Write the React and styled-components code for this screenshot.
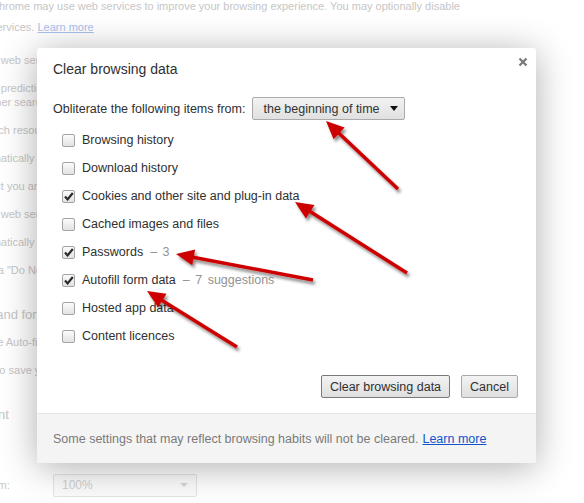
import React from "react";
import styled, { createGlobalStyle } from "styled-components";

const GlobalStyle = createGlobalStyle`
  html, body {
    margin: 0;
    padding: 0;
    background: #fff;
    overflow: hidden;
  }
  body {
    font-family: "Liberation Sans", Arial, sans-serif;
  }
`;

const Screen = styled.div`
  position: relative;
  width: 584px;
  height: 503px;
  overflow: hidden;
  background: #fff;
`;

// faded settings page behind the overlay
const Page = styled.div`
  font-size: 11px;
  color: #c6c6c6;
`;

const Intro = styled.p`
  margin: -4px 0 0 -9px;
  line-height: 21px;
  white-space: nowrap;
`;

const FadedLink = styled.span`
  color: #a8c0ec;
  text-decoration: underline;
`;

const Section = styled.div`
  display: flex;
  flex-direction: column;
  margin-left: -31px;
  margin-top: 8px;
`;

const PageRow = styled.div`
  padding: 7px 0;
  line-height: 14px;
  white-space: nowrap;
`;

const PageHeading = styled.div`
  margin: 22px 0 4px ${(p) => p.$indent}px;
  font-size: 13px;
  line-height: 18px;
  white-space: nowrap;
`;

const ControlRow = styled.div`
  display: flex;
  align-items: center;
  gap: 5px;
  height: 28px;
  margin: ${(p) => (p.$first ? "4px" : "11px")} 0 0 -18px;
`;

const ControlLabel = styled.span`
  width: 97px;
  white-space: nowrap;
`;

const FadedSelect = styled.div`
  display: flex;
  align-items: center;
  justify-content: space-between;
  box-sizing: border-box;
  width: ${(p) => p.$w}px;
  height: 23px;
  padding: 0 8px;
  border: 1px solid #e4e4e4;
  border-radius: 2px;
  background: #fbfbfb;
  color: #d0d0d0;
  font-size: 12px;
`;

const FadedCaret = styled.span`
  width: 0;
  height: 0;
  border-left: 4px solid transparent;
  border-right: 4px solid transparent;
  border-top: 4px solid #d6d6d6;
`;

// dialog overlay
const Dialog = styled.div`
  position: absolute;
  left: 37px;
  top: 48px;
  width: 499px;
  display: flex;
  flex-direction: column;
  background: #fff;
  border-radius: 3px;
  box-shadow: 0 4px 36px rgba(0, 0, 0, 0.32);
  font-size: 12.5px;
  color: #303030;
  overflow: hidden;
`;

const Title = styled.h1`
  margin: 12px 16px 0;
  font-size: 14px;
  font-weight: normal;
  line-height: 18px;
  color: #303030;
`;

const Close = styled.div`
  position: absolute;
  top: 9px;
  right: 8px;
  width: 10px;
  height: 10px;
  display: flex;
`;

const Body = styled.div`
  display: flex;
  flex-direction: column;
  padding: 0 18px 0 16px;
`;

const PeriodRow = styled.div`
  display: flex;
  align-items: center;
  gap: 7px;
  margin-top: 19px;
  height: 23px;
`;

const SelectButton = styled.div`
  display: flex;
  align-items: center;
  justify-content: space-between;
  box-sizing: border-box;
  width: 153px;
  height: 23px;
  padding: 0 6px 0 10px;
  border: 1px solid #aaaaaa;
  border-radius: 2px;
  background: linear-gradient(#f2f2f2, #e0e0e0);
  color: #333;
`;

const Caret = styled.span`
  width: 0;
  height: 0;
  border-left: 4px solid transparent;
  border-right: 4px solid transparent;
  border-top: 5px solid #111;
`;

const Items = styled.div`
  display: flex;
  flex-direction: column;
  margin-top: 6px;
  padding-left: 9px;
`;

const Item = styled.label`
  display: flex;
  align-items: center;
  gap: 7px;
  height: 28px;
`;

const Box = styled.span`
  display: flex;
  align-items: center;
  justify-content: center;
  box-sizing: border-box;
  width: 13px;
  height: 13px;
  border: 1px solid #a4a4a4;
  border-radius: 2px;
  background: linear-gradient(#fbfbfb, #e2e2e2);
`;

const Counter = styled.span`
  color: #929292;
  word-spacing: 2px;
`;

const Actions = styled.div`
  display: flex;
  justify-content: flex-end;
  gap: 11px;
  margin-top: 25px;
`;

const Button = styled.button`
  height: 23px;
  padding: 0 8px;
  border: 1px solid ${(p) => (p.$primary ? "#7a7a7a" : "#a9a9a9")};
  border-radius: 2px;
  background: linear-gradient(#f3f3f3, #dfdfdf);
  font-family: "Liberation Sans", Arial, sans-serif;
  font-size: 12.5px;
  color: #303030;
`;

const Footer = styled.div`
  margin-top: 15px;
  height: 49px;
  display: flex;
  align-items: center;
  padding-left: 16px;
  border-top: 1px solid #e6e6e6;
  background: #f4f4f4;
  color: #7a7a7a;
`;

const Link = styled.a`
  margin-left: 4px;
  color: #1155cc;
  text-decoration: underline;
`;

const Overlay = styled.svg`
  position: absolute;
  left: 0;
  top: 0;
  pointer-events: none;
`;

const Check = () => (
  <svg width="10" height="9" viewBox="0 0 10 9">
    <path d="M1 4.6 L3.6 7.4 L8.8 1" fill="none" stroke="#2a2a2a" strokeWidth="2.2" />
  </svg>
);

const CloseIcon = () => (
  <svg width="10" height="10" viewBox="0 0 10 10">
    <path d="M1.5 1.5 L8.5 8.5 M8.5 1.5 L1.5 8.5" stroke="#777" strokeWidth="2.2" />
  </svg>
);

const Arrow = ({ from, to }) => {
  const dx = to[0] - from[0];
  const dy = to[1] - from[1];
  const len = Math.hypot(dx, dy);
  const ux = dx / len;
  const uy = dy / len;
  const bx = to[0] - ux * 18;
  const by = to[1] - uy * 18;
  const hw = 8;
  const pts = [
    `${to[0]},${to[1]}`,
    `${bx - uy * hw},${by + ux * hw}`,
    `${bx + uy * hw},${by - ux * hw}`,
  ].join(" ");
  return (
    <g filter="url(#shade)">
      <line x1={from[0]} y1={from[1]} x2={bx + ux * 2} y2={by + uy * 2} stroke="#cc0000" strokeWidth="3.5" />
      <polygon points={pts} fill="#cc0000" />
    </g>
  );
};

const arrows = [
  { from: [398, 189], to: [326, 121] },
  { from: [407, 273], to: [295, 202] },
  { from: [313, 280], to: [176, 254] },
  { from: [237, 347], to: [147, 291] },
];

const items = [
  { label: "Browsing history" },
  { label: "Download history" },
  { label: "Cookies and other site and plug-in data", checked: true },
  { label: "Cached images and files" },
  { label: "Passwords", checked: true, count: "– 3" },
  { label: "Autofill form data", checked: true, count: "– 7 suggestions" },
  { label: "Hosted app data" },
  { label: "Content licences" },
];

export default function App() {
  return (
    <Screen>
      <GlobalStyle />
      <Page>
        <Intro>
          Chrome may use web services to improve your browsing experience. You may optionally disable
          <br />
          services. <FadedLink>Learn more</FadedLink>
        </Intro>
        <Section>
          <PageRow>Use a web service to help resolve navigation errors</PageRow>
          <PageRow>
            Use a prediction service to help complete searches and URLs
            <br />
            launcher search box
          </PageRow>
          <PageRow>Prefetch resources to load pages more quickly</PageRow>
          <PageRow>Automatically send some system information</PageRow>
          <PageRow>Protect you and your device from dangerous sites</PageRow>
          <PageRow>Use a web service to help resolve spelling errors</PageRow>
          <PageRow>Automatically send usage statistics and crash reports</PageRow>
          <PageRow>Send a "Do Not Track" request with your browsing traffic</PageRow>
          <PageHeading $indent={-40}>Passwords and forms</PageHeading>
          <PageRow>Enable Auto-fill to fill out web forms in a single click</PageRow>
          <PageRow>Offer to save your web passwords</PageRow>
          <PageHeading $indent={-33}>Web content</PageHeading>
          <ControlRow $first>
            <ControlLabel>Font size:</ControlLabel>
            <FadedSelect $w={144}>Medium<FadedCaret /></FadedSelect>
            <FadedSelect $w={121}>Customise fonts</FadedSelect>
          </ControlRow>
          <ControlRow>
            <ControlLabel>Page zoom:</ControlLabel>
            <FadedSelect $w={144}>100%<FadedCaret /></FadedSelect>
          </ControlRow>
        </Section>
      </Page>

      <Dialog>
        <Title>Clear browsing data</Title>
        <Close>
          <CloseIcon />
        </Close>
        <Body>
          <PeriodRow>
            <span>Obliterate the following items from:</span>
            <SelectButton>
              the beginning of time
              <Caret />
            </SelectButton>
          </PeriodRow>
          <Items>
            {items.map((it) => (
              <Item key={it.label}>
                <Box>{it.checked && <Check />}</Box>
                <span>{it.label}</span>
                {it.count && <Counter>{it.count}</Counter>}
              </Item>
            ))}
          </Items>
          <Actions>
            <Button $primary>Clear browsing data</Button>
            <Button>Cancel</Button>
          </Actions>
        </Body>
        <Footer>
          Some settings that may reflect browsing habits will not be cleared.
          <Link>Learn more</Link>
        </Footer>
      </Dialog>

      <Overlay width="584" height="503" viewBox="0 0 584 503">
        <defs>
          <filter id="shade" x="-20%" y="-20%" width="140%" height="140%">
            <feDropShadow dx="2" dy="3" stdDeviation="1.6" floodColor="#000" floodOpacity="0.45" />
          </filter>
        </defs>
        {arrows.map((a, i) => (
          <Arrow key={i} from={a.from} to={a.to} />
        ))}
      </Overlay>
    </Screen>
  );
}
